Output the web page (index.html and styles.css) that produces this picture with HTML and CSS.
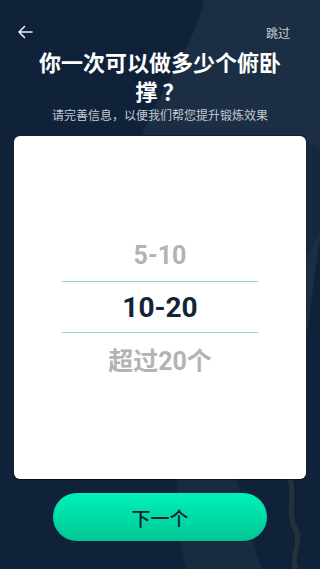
FILE: index.html
```html
<!DOCTYPE html>
<html lang="zh-CN">
<head>
    <meta charset="UTF-8">
    <meta name="viewport" content="width=device-width, initial-scale=1.0">
    <title>俯卧撑</title>
    <link rel="stylesheet" href="styles.css">
</head>
<body>
    <div class="screen">
        <svg class="backdrop" width="320" height="569" viewBox="0 0 320 569">
            <path d="M204 0 C196 40 166 80 142 135 L306 135 L306 340 C312 300 316 260 320 240 L320 0 Z" fill="#1b2e43"/>
            <path d="M306 140 L320 150 L320 230 L306 260 Z" fill="#15283d"/>
            <path d="M176 478 C180 510 178 540 186 569 L262 569 C250 540 246 505 236 478 Z" fill="#182b40"/>
            <path d="M290 478 C296 500 286 515 296 530 C302 545 290 555 296 569" fill="none" stroke="#3a4a3c" stroke-width="5" opacity="0.45"/>
        </svg>

        <div class="topbar">
            <button class="back" aria-label="返回">
                <svg width="16" height="14" viewBox="0 0 16 14">
                    <path d="M15 7 H2 M7.5 1.5 L2 7 L7.5 12.5" fill="none" stroke="#e9eef3" stroke-width="1.6" stroke-linecap="round" stroke-linejoin="round"/>
                </svg>
            </button>
            <span class="skip">跳过</span>
        </div>

        <h1 class="title">你一次可以做多少个俯卧撑&nbsp;？</h1>
        <p class="subtitle">请完善信息，以便我们帮您提升锻炼效果</p>

        <div class="card">
            <div class="picker">
                <div class="pick-row">5-10</div>
                <div class="pick-row selected">10-20</div>
                <div class="pick-row">超过20个</div>
            </div>
        </div>

        <button class="next">下一个</button>
    </div>
</body>
</html>
```

FILE: styles.css
```css
body {
    margin: 0;
    font-family: Roboto, "Noto Sans CJK SC", sans-serif;
    background-color: #10223a;
}

.screen {
    position: relative;
    width: 320px;
    height: 569px;
    overflow: hidden;
    background-color: #10223a;
}

.backdrop {
    position: absolute;
    top: 0;
    left: 0;
}

.topbar,
.title,
.subtitle,
.card,
.next {
    position: relative;
}

.topbar {
    display: flex;
    justify-content: space-between;
    align-items: center;
    height: 20px;
    padding: 22px 30px 0 17px;
}

.back {
    background: none;
    border: none;
    padding: 0;
    display: flex;
}

.skip {
    font-family: "Noto Sans CJK SC", sans-serif;
    font-size: 12px;
    color: #cfd3d8;
}

.title {
    margin: 5px 0 0;
    padding: 0 38px;
    font-family: "Noto Sans CJK SC", sans-serif;
    font-size: 22px;
    line-height: 29px;
    font-weight: bold;
    color: #fff;
    text-align: center;
}

.subtitle {
    margin: 2px 0 0;
    font-family: "Noto Sans CJK SC", sans-serif;
    font-size: 12px;
    line-height: 16px;
    color: #c3cbd4;
    text-align: center;
}

.card {
    margin: 13px 14px 0;
    height: 343px;
    box-sizing: border-box;
    padding-top: 93px;
    background-color: #fff;
    border-radius: 6px;
    box-shadow: 0 1px 1px rgba(0, 0, 0, 0.5);
}

.picker {
    width: 196px;
    margin: 0 auto;
}

.pick-row {
    height: 52px;
    display: flex;
    align-items: center;
    justify-content: center;
    font-size: 25px;
    font-weight: bold;
    color: #b3b3b3;
}

.pick-row.selected {
    font-size: 28px;
    color: #13243a;
    border-top: 1px solid #84dccb;
    border-bottom: 1px solid #84dccb;
    height: 50px;
}

.next {
    display: block;
    margin: 14px auto 0;
    width: 214px;
    height: 48px;
    border: none;
    border-radius: 24px;
    background: linear-gradient(#00f2b8, #00c694);
    font-family: "Noto Sans CJK SC", sans-serif;
    font-size: 19px;
    font-weight: 500;
    color: #0f2236;
}
```
